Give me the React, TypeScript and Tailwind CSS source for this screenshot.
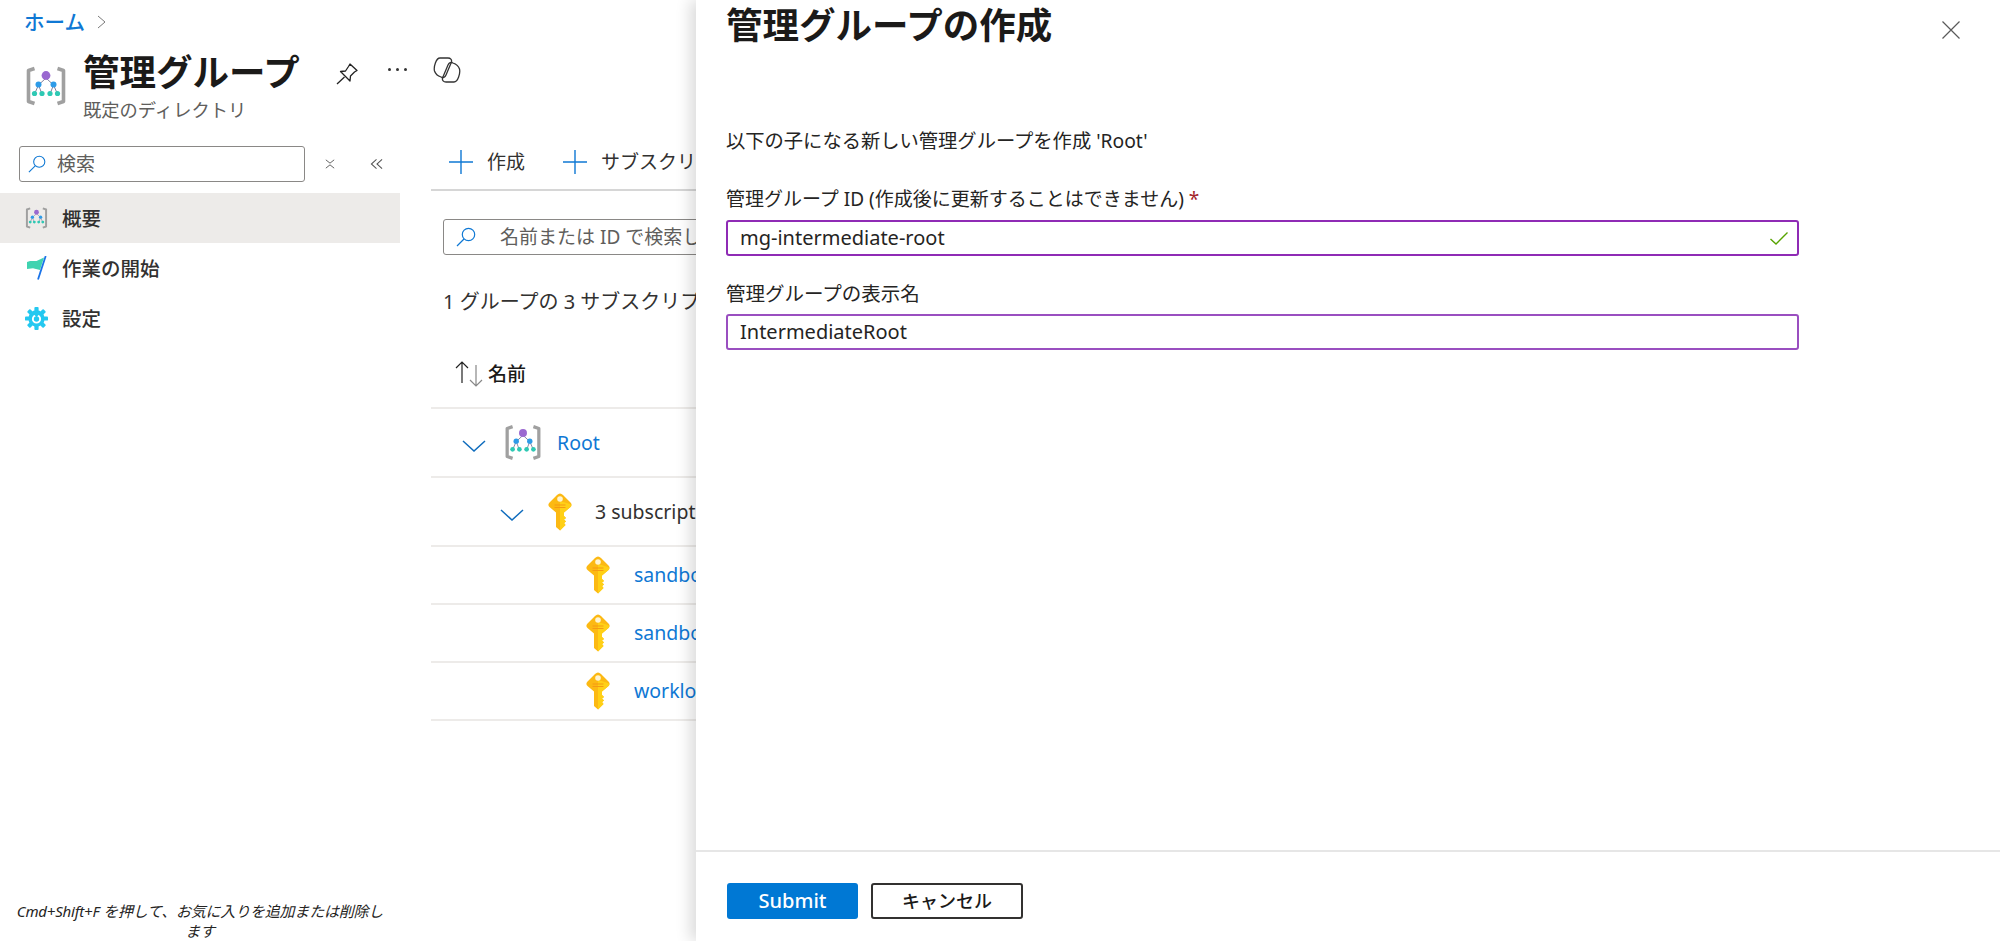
const font = '"Noto Sans", "Noto Sans CJK JP", sans-serif';

const MgIcon = ({ className }: { className: string }) => (
  <svg viewBox="0 0 42 40" className={className} fill="none">
    <path d="M9.5 2.5 L3.5 4.5 V35.5 L9.5 37.5" stroke="#a0a0a0" strokeWidth="3.6" strokeLinejoin="round" />
    <path d="M32.5 2.5 L38.5 4.5 V35.5 L32.5 37.5" stroke="#a0a0a0" strokeWidth="3.6" strokeLinejoin="round" />
    <path d="M21 12 L13.5 19 L9.5 28 M13.5 19 L17 28 M21 12 L28.5 19 L25 28 M28.5 19 L32.5 28" stroke="#6f6f90" strokeWidth="0.9" />
    <circle cx="21" cy="9.5" r="4.4" fill="#9a68d0" />
    <circle cx="13.5" cy="18.5" r="3" fill="#2d9be8" />
    <circle cx="28.5" cy="18.5" r="3" fill="#2d9be8" />
    <circle cx="9.5" cy="27.5" r="2.6" fill="#2ec9b4" />
    <circle cx="17" cy="27.5" r="2.6" fill="#2ec9b4" />
    <circle cx="25" cy="27.5" r="2.6" fill="#2ec9b4" />
    <circle cx="32.5" cy="27.5" r="2.6" fill="#2ec9b4" />
  </svg>
);

const KeyIcon = () => (
  <svg viewBox="0 0 24 38" className="w-6 h-[38px] shrink-0" fill="none">
    <path d="M12 0.5 C13 0.5 14 1 15 2 L22.5 9.5 C24 11 24 12.5 22.5 14 L16 19.5 V23 L18 25 L16 26.5 L18 28.5 L16 30 L17.5 32 L12 37.5 L8 34 V19.5 L1.5 14 C0 12.5 0 11 1.5 9.5 L9 2 C10 1 11 0.5 12 0.5 Z" fill="#fcb913" />
    <path d="M12 8 L22 11 C23.5 12 23.5 13 22.5 14 L16 19.5 V23 L18 25 L16 26.5 L18 28.5 L16 30 L17.5 32 L12 37.5 Z" fill="#ffd016" />
    <circle cx="12" cy="6" r="2.8" fill="#fff4d0" />
    <path d="M6.5 12 H17.5 M6.5 14.5 H17.5" stroke="#f59a12" strokeWidth="1.2" />
  </svg>
);

const SearchIcon = ({ className }: { className: string }) => (
  <svg viewBox="0 0 20 20" className={className} fill="none" stroke="#0f78d4" strokeWidth="1.2">
    <circle cx="12.5" cy="7.5" r="6.2" />
    <path d="M8 12 L1 19" />
  </svg>
);

const Plus = () => (
  <svg viewBox="0 0 24 24" className="w-6 h-6 shrink-0" stroke="#0f78d4" strokeWidth="1.4">
    <path d="M12 0 V24 M0 12 H24" />
  </svg>
);

const Chevron = () => (
  <svg viewBox="0 0 24 12" className="w-6 h-3 mt-[6px] shrink-0" fill="none" stroke="#0f6cbd" strokeWidth="1.5">
    <path d="M1 1 L12 11 L23 1" />
  </svg>
);

const SubRow = ({ name }: { name: string }) => (
  <div className="flex items-center h-[58px] pl-[155px] gap-6 border-b-2 border-[#edebe9] text-[19.5px] text-[#0f78d4] whitespace-nowrap">
    <KeyIcon />
    <span>{name}</span>
  </div>
);

const SideItem = ({ icon, label, active }: { icon: React.ReactNode; label: string; active?: boolean }) => (
  <div className={`flex items-center h-[50px] pl-[25px] gap-[14px] text-[19.5px] font-medium text-[#323130] ${active ? 'bg-[#edebe9]' : ''}`}>
    <div className="w-[23px] flex justify-center">{icon}</div>
    <span className="mt-[1px]">{label}</span>
  </div>
);

export default function App() {
  return (
    <div className="relative h-[941px] w-[2000px] overflow-hidden bg-white text-[#252423]" style={{ fontFamily: font }}>
      {/* header */}
      <div className="h-[146px] pl-[24px]">
        <div className="flex items-center h-[44px] gap-3">
          <span className="text-[20.5px] font-medium text-[#0f78d4]">ホーム</span>
          <svg viewBox="0 0 9 14" className="w-[9px] h-[14px]" fill="none" stroke="#7a7a7a" strokeWidth="1">
            <path d="M1 1 L8 7 L1 13" />
          </svg>
        </div>
        <div className="flex">
          <MgIcon className="w-[42px] h-10 mt-[22px] ml-[1px]" />
          <div className="ml-[16px]">
            <div className="flex items-center h-[48px]">
              <h1 className="text-[36.5px] font-bold leading-none mt-2 text-[#1b1a19] whitespace-nowrap">管理グループ</h1>
              <svg viewBox="0 0 22 22" className="w-[22px] h-[22px] ml-[36px] mt-3" fill="none" stroke="#222" strokeWidth="1.3" strokeLinejoin="round">
                <path d="M14 1 L21 7.5 L18.5 9 L14.5 13 L14 18 L4.5 8.5 L9.5 8 L12.5 3.5 Z" />
                <path d="M8.5 14 L1 21" />
              </svg>
              <div className="flex gap-[5px] ml-[30px] mt-[3px]">
                <div className="w-[3px] h-[3px] rounded-full bg-[#333]" />
                <div className="w-[3px] h-[3px] rounded-full bg-[#333]" />
                <div className="w-[3px] h-[3px] rounded-full bg-[#333]" />
              </div>
              <svg viewBox="0 0 28 26" className="w-7 h-[26px] ml-[26px] mt-[4px]" fill="none" stroke="#333" strokeWidth="1.3" strokeLinejoin="round">
                <path d="M7 1 H15 C17.5 1 19 2.5 18.5 5 L13 18 C12 20.5 10 21 8 20 C5 19 2.5 17 1.5 14 C0.5 10 3 1 7 1 Z" />
                <path d="M7 1 H15 C17.5 1 19 2.5 18.5 5 L13 18 C12 20.5 10 21 8 20 C5 19 2.5 17 1.5 14 C0.5 10 3 1 7 1 Z" transform="rotate(180 14 13)" />
              </svg>
            </div>
            <p className="text-[18.3px] text-[#605e5c] mt-[9px] leading-none">既定のディレクトリ</p>
          </div>
        </div>
      </div>

      <div className="flex">
        {/* sidebar */}
        <aside className="relative w-[400px] h-[795px] shrink-0">
          <div className="flex items-center pl-[19px] h-[47px] pb-[11px]">
            <div className="flex items-center w-[286px] h-9 border border-[#8a8886] rounded-[3px] pl-2 gap-[11px]">
              <SearchIcon className="w-[18px] h-[18px]" />
              <span className="text-[19px] text-[#605e5c]">検索</span>
            </div>
            <svg viewBox="0 0 12 12" className="w-[10px] h-3 ml-5" fill="none" stroke="#555" strokeWidth="1.1">
              <path d="M1 1 L6 5 L11 1 M1 11 L6 7 L11 11" />
            </svg>
            <svg viewBox="0 0 14 12" className="w-[13px] h-3 ml-[35px]" fill="none" stroke="#555" strokeWidth="1.1">
              <path d="M7 1 L1.5 6 L7 11 M13 1 L7.5 6 L13 11" />
            </svg>
          </div>
          <SideItem active label="概要" icon={<MgIcon className="w-[23px] h-[22px]" />} />
          <SideItem
            label="作業の開始"
            icon={
              <svg viewBox="0 0 20 24" className="w-5 h-6">
                <path d="M0 6 L3 5 H9.5 L17 1.5 L13 14 L6 12.3 L0 13 Z" fill="#3fd3b0" />
                <path d="M18.7 0 L11 23.5" stroke="#1a73e8" strokeWidth="1.8" />
              </svg>
            }
          />
          <SideItem
            label="設定"
            icon={
              <svg viewBox="0 0 24 24" className="w-[23px] h-[23px]">
                <circle cx="12" cy="12" r="8.5" fill="#24c8f0" />
                {[0, 45, 90, 135, 180, 225, 270, 315].map(a => (
                  <rect key={a} x="9.8" y="0" width="4.4" height="5" rx="1" fill="#24c8f0" transform={`rotate(${a} 12 12)`} />
                ))}
                <circle cx="12" cy="12.5" r="3.8" fill="none" stroke="#fff" strokeWidth="2" />
                <path d="M9 7 H15 L12 11 Z" fill="#24c8f0" />
              </svg>
            }
          />
          <p className="absolute left-0 right-0 top-[756px] text-center text-[15px] italic leading-[19.5px] tracking-[-0.2px] text-[#252423]">
            Cmd+Shift+F を押して、お気に入りを追加または削除し<br />ます
          </p>
        </aside>

        {/* main blade, the panel hides the rest of it */}
        <main className="w-[296px] shrink-0 overflow-hidden">
          <div className="w-[600px] pl-[31px]">
            <div className="flex items-start h-[45px] pt-[4px] border-b-2 border-[#d6d6d6] pl-[18px] text-[19px] text-[#323130] whitespace-nowrap">
              <Plus />
              <span className="ml-[14px] leading-[24px]">作成</span>
              <div className="ml-[38px]"><Plus /></div>
              <span className="ml-[14px] leading-[24px]">サブスクリプションの追加</span>
            </div>
            <div className="flex items-center h-9 mt-[28px] ml-3 border border-[#8a8886] rounded-[3px] pl-3 whitespace-nowrap">
              <SearchIcon className="w-5 h-5" />
              <span className="ml-6 text-[19px] text-[#605e5c]">名前または ID で検索します</span>
            </div>
            <p className="ml-[12px] mt-[33px] text-[20px] leading-[28px] text-[#323130] whitespace-nowrap">1 グループの 3 サブスクリプション</p>
            <div className="flex items-center h-[64px] pb-[4px] mt-[29px] border-b-2 border-[#edebe9] pl-6 font-medium text-[19px] text-[#1b1a19]">
              <svg viewBox="0 0 28 26" className="w-7 h-[26px]" fill="none" strokeWidth="1.2">
                <path d="M7 22 V1 M1 7 L7 1 L13 7" stroke="#222" />
                <path d="M21 4 V25 M15 19 L21 25 L27 19" stroke="#888" />
              </svg>
              <span className="ml-[5px]">名前</span>
            </div>
            <div className="flex items-center h-[69px] border-b-2 border-[#edebe9] pl-[31px] text-[19.5px] text-[#0f78d4]">
              <Chevron />
              <MgIcon className="w-[38px] h-[37px] ml-[18px]" />
              <span className="ml-[15px]">Root</span>
            </div>
            <div className="flex items-center h-[69px] border-b-2 border-[#edebe9] pl-[69px] text-[19.5px] text-[#323130] whitespace-nowrap">
              <Chevron />
              <div className="ml-6"><KeyIcon /></div>
              <span className="ml-[23px]">3 subscriptions</span>
            </div>
            <SubRow name="sandbox-1" />
            <SubRow name="sandbox-2" />
            <SubRow name="workload-1" />
          </div>
        </main>
      </div>

      {/* create panel */}
      <section className="absolute right-0 top-0 bottom-0 w-[1304px] flex flex-col bg-white shadow-[-6px_0_14px_rgba(0,0,0,0.14)]">
        <div className="flex-1 pl-[30px]">
          <div className="flex items-start justify-between pr-[40px]">
            <h2 className="text-[36.5px] font-bold leading-[50px] text-[#1b1a19] whitespace-nowrap">管理グループの作成</h2>
            <svg viewBox="0 0 18 18" className="w-[18px] h-[18px] mt-[21px]" fill="none" stroke="#5a5a5a" strokeWidth="1.2">
              <path d="M0.5 0.5 L17.5 17.5 M17.5 0.5 L0.5 17.5" />
            </svg>
          </div>
          <p className="mt-[77px] text-[19.3px] leading-[28px] text-[#252423] whitespace-nowrap">以下の子になる新しい管理グループを作成 'Root'</p>
          <label className="block mt-[30px] text-[19px] leading-[28px] text-[#252423]">
            管理グループ ID (作成後に更新することはできません) <span className="text-[#a4262c]">*</span>
          </label>
          <div className="flex items-center justify-between w-[1073px] h-9 mt-[7px] pl-3 pr-[9px] border-2 border-[#8f2bb5] rounded-[3px] text-[20px] text-[#252423]">
            <span>mg-intermediate-root</span>
            <svg viewBox="0 0 18 13" className="w-[18px] h-[13px]" fill="none" stroke="#57a300" strokeWidth="1.4">
              <path d="M0.5 7 L6 12 L17.5 0.5" />
            </svg>
          </div>
          <label className="block mt-[24px] text-[19.5px] leading-[28px] text-[#252423]">管理グループの表示名</label>
          <div className="flex items-center w-[1073px] h-9 mt-[6px] pl-3 border-2 border-[#9a4fc0] rounded-[3px] text-[20px] text-[#252423]">
            IntermediateRoot
          </div>
        </div>
        <div className="flex items-start h-[91px] pt-[31px] pl-[31px] gap-[13px] border-t-2 border-[#e6e6e6]">
          <button className="w-[131px] h-9 rounded-[3px] bg-[#0078d4] text-white text-[20px] font-medium">Submit</button>
          <button className="w-[152px] h-9 rounded-[3px] border-2 border-[#323130] bg-white text-[#1b1a19] text-[18px] font-medium">キャンセル</button>
        </div>
      </section>
    </div>
  );
}
